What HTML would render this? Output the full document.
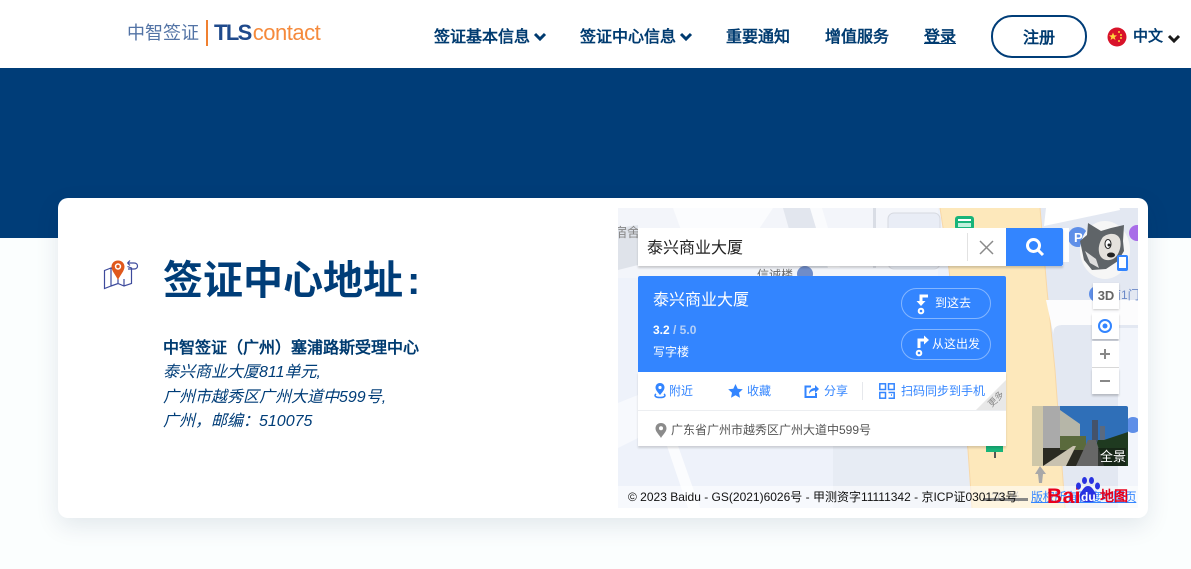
<!DOCTYPE html>
<html lang="zh"><head><meta charset="utf-8"><title>签证中心地址</title>
<style>
html,body{margin:0;padding:0;width:1191px;height:569px;overflow:hidden;background:#fbfefe;font-family:"Liberation Sans","WenQuanYi Zen Hei",sans-serif}
.a{position:absolute;white-space:nowrap}
.nav{font:bold 16px/20px "Liberation Sans","WenQuanYi Zen Hei",sans-serif;color:#003b70;top:28px}
.wq{font-family:"Liberation Sans","WenQuanYi Zen Hei",sans-serif}
.blue{color:#3385ff;font-size:12px;line-height:14px;top:384px}
</style></head><body>
<div class="a" style="left:0;top:0;width:1191px;height:68px;background:#fff"></div>
<div class="a" style="left:0;top:68px;width:1191px;height:170px;background:#003d78"></div>

<!-- logo -->
<div class="a" style="left:127px;top:22px;font-size:18px;line-height:22px;color:#5273a5">中智签证</div>
<div class="a" style="left:206px;top:20px;width:2px;height:26px;background:#f08030"></div>
<div class="a" style="left:214px;top:19px;font-size:22px;line-height:28px;font-weight:bold;color:#1f4a8c;letter-spacing:-1.6px">TLS<span style="font-weight:normal;color:#f58a3c;letter-spacing:-.5px;margin-left:2px">contact</span></div>

<!-- nav -->
<div class="a nav" style="left:434px">签证基本信息</div>
<svg class="a" style="left:533px;top:31px" width="14" height="11" viewBox="0 0 14 11"><path d="M2 3l5 5 5-5" fill="none" stroke="#003b70" stroke-width="3"/></svg>
<div class="a nav" style="left:580px">签证中心信息</div>
<svg class="a" style="left:679px;top:31px" width="14" height="11" viewBox="0 0 14 11"><path d="M2 3l5 5 5-5" fill="none" stroke="#003b70" stroke-width="3"/></svg>
<div class="a nav" style="left:726px">重要通知</div>
<div class="a nav" style="left:825px">增值服务</div>
<div class="a nav" style="left:924px;text-decoration:underline">登录</div>
<div class="a" style="left:991px;top:15px;width:92px;height:39px;border:2px solid #003d78;border-radius:21px"></div>
<div class="a nav" style="left:1023px;top:29px">注册</div>
<svg class="a" style="left:1107px;top:27px" width="20" height="20" viewBox="0 0 20 20"><circle cx="10" cy="10" r="9.5" fill="#d8132a"/><path d="M6 5.500l1.100 2.800 2.900.1-2.300 1.800.8 2.800L6 11.400 3.500 13l.8-2.800L2 8.400l2.900-.1z" fill="#ffd23c"/><circle cx="12" cy="5" r="1" fill="#ffd23c"/><circle cx="14" cy="8" r="1" fill="#ffd23c"/><circle cx="14" cy="11" r="1" fill="#ffd23c"/><circle cx="12" cy="14" r="1" fill="#ffd23c"/></svg>
<div class="a" style="left:1133px;top:27px;font-size:15px;line-height:20px;font-weight:bold;color:#003b70">中文</div>
<svg class="a" style="left:1167px;top:33px" width="14" height="11" viewBox="0 0 14 11"><path d="M2 3l5 5 5-5" fill="none" stroke="#1a1a1a" stroke-width="3"/></svg>

<!-- card -->
<div class="a" style="left:58px;top:198px;width:1090px;height:320px;background:#fff;border-radius:10px;box-shadow:0 8px 24px rgba(0,40,80,.1)"></div>

<!-- pin icon -->
<svg class="a" style="left:102px;top:257px" width="38" height="34" viewBox="0 0 38 34" fill="none">
<path d="M2.500 13.500L9 11v18l-6.500 2.500zM9 29l7-2.500 6 2.500 7.500-2.500V11l-4-1.500M9 11l2 1M16 22v4.500M22 22v7" stroke="#3d4a9c" stroke-width="1.200"/>
<path d="M16 3.500c-4 0-6.500 3-6.500 6.300 0 4 4 8 6.500 13.200 2.500-5.200 6.500-9.200 6.500-13.200 0-3.300-2.500-6.300-6.500-6.300z" fill="#e0581c"/>
<circle cx="16" cy="9.500" r="3.200" fill="#fff"/><circle cx="16" cy="9.500" r="1.700" fill="#e0581c"/>
<path d="M25.500 6h6.500c2.500 0 3.500 1.500 3.500 3s-1 3-3.500 3h-6M25.500 6l2.500-2.500M25.500 6l2.500 2.500" stroke="#3d4a9c" stroke-width="1.200"/>
</svg>

<!-- left text -->
<div class="a" style="left:163px;top:255px;font-family:'Liberation Sans','Noto Sans CJK SC',sans-serif;font-size:40px;line-height:52px;font-weight:bold;color:#003d78">签证中心地址<span style="margin-left:4px">:</span></div>
<div class="a" style="left:163px;top:337px;font-size:16px;line-height:23px;font-weight:bold;color:#003b70">中智签证（广州）塞浦路斯受理中心</div>
<div class="a" style="left:163px;top:361px;font-size:16px;line-height:24.5px;font-style:italic;color:#003d78">泰兴商业大厦811单元,<br>广州市越秀区广州大道中599号,<br>广州，邮编：510075</div>

<!-- map -->
<div class="a" style="left:618px;top:208px;width:520px;height:300px;overflow:hidden;background:#eef2fa">
<svg style="position:absolute;left:0;top:0" width="520" height="300" viewBox="0 0 520 300">
<rect width="520" height="300" fill="#eef2fa"/>
<path d="M0 0h320v70H0z" fill="#f3f5fa"/>
<path d="M0 20l20-3v40l-20 5z" fill="#dfe3ea"/>
<path d="M55 0h100l-20 30-60 25z" fill="#fbfcfe"/>
<path d="M165 0h35l12 60h-30z" fill="#e2e6ee"/>
<path d="M192 0h12l18 60h-12z" fill="#fafbfd"/>
<path d="M255 0h3v60h-3z" fill="#d9dde5"/>
<rect x="270" y="5" width="52" height="56" rx="6" fill="#e9edf6" stroke="#d6d9e0"/>
<path d="M215 232h135l8 68H215z" fill="#e7ecf4"/>
<path d="M47 232h11l24 68H70z" fill="#fbfcfe"/>
<path d="M0 195l50-20v40L0 240z" fill="#f7f9fd"/>
<path d="M422 0h98v300h-75l-8-138-8-80z" fill="#e3e8f2"/>
<path d="M428 0l70-14 4 16-76 16z" fill="#fff"/>
<path d="M322 0h100l7 82 8 80 10 138h-93l-4-58-20-190z" fill="#fde8bb"/>
<path d="M322 0l8 52 20 190 4 58M422 0l7 82 8 80 10 138" fill="none" stroke="#f8d8a8" stroke-width="1"/>
<path d="M429 92h91v25H445c-8 0-11 4-9 12l-8-37z" fill="#fcfcfd"/>
<rect x="500" y="120" width="20" height="180" fill="#f2f5fb"/>
<rect x="337" y="8" width="19" height="14" rx="3" fill="#18b47a"/><rect x="340" y="11" width="13" height="2" fill="#fff"/><rect x="340" y="15" width="13" height="4" fill="#bff0dc"/>
<rect x="368" y="238" width="17" height="6" fill="#18b47a"/><rect x="376" y="244" width="2" height="6" fill="#555"/>
<circle cx="460" cy="29" r="10" fill="#5f8fe8"/><text x="456" y="34" font-size="13" font-weight="bold" fill="#fff" font-family="Liberation Sans">P</text>
<circle cx="519" cy="25" r="8" fill="#a86de8"/>
<circle cx="479" cy="86" r="8" fill="#5f8fe8"/>
<text x="491" y="91" font-size="12" fill="#6a88c8" font-family="Liberation Sans,WenQuanYi Zen Hei">南1门</text>
<circle cx="515" cy="217" r="8" fill="#5f8fe8"/>
<text x="-4" y="29" font-size="13" fill="#888" font-family="Liberation Sans,WenQuanYi Zen Hei">宿舍</text>
<text x="139" y="71" font-size="12" fill="#666" font-family="Liberation Sans,WenQuanYi Zen Hei">信诚楼</text>
<circle cx="187" cy="66" r="8" fill="#6f8cc8"/>
<!-- panorama -->
<rect x="414" y="198" width="96" height="60" rx="2" fill="#2f6fb8"/>
<path d="M414 198h11v60h-11z" fill="#cfc7a8"/>
<path d="M425 198h17v60h-17z" fill="#aaa"/>
<path d="M425 240h55v18h-55z" fill="#2a2a22"/>
<path d="M442 202l20 14v22h-20z" fill="#b6b6a8"/>
<path d="M442 228h26v14h-26z" fill="#5a6a3c"/>
<rect x="474" y="212" width="6" height="22" fill="#44526a"/><rect x="482" y="218" width="5" height="18" fill="#5a6a80"/>
<path d="M470 258l10-26h6l24-8v34z" fill="#1f3a20"/>
<path d="M458 258l12-26h8l8 26z" fill="#676767"/>
<path d="M425 258l30-20h3l-10 20z" fill="#c9c2b0"/>
<rect x="480" y="240" width="28" height="18" fill="#131a12" opacity=".6"/>
<path d="M422 258l-5 8h3l1 9h3l1-9h3z" fill="#a8a8a8"/>
<text x="373" y="293" font-size="12" fill="#999" font-family="Liberation Sans,WenQuanYi Zen Hei">20 米</text>
</svg>

<!-- copyright -->
<div class="a" style="left:0;top:278px;width:520px;height:22px;background:rgba(255,255,255,.55)"></div>
<div class="a" style="left:365px;top:290px;width:45px;height:3px;background:#888"></div>
<div class="a" style="left:10px;top:281px;font-size:12px;line-height:16px;color:#111">© 2023 Baidu - GS(2021)6026号 - 甲测资字11111342 - 京ICP证030173号</div>
<div class="a" style="left:413px;top:281px;font-size:12px;line-height:16px;color:#3385ff;text-decoration:underline;letter-spacing:-.3px">版权所有百度地图页</div>
<div class="a" style="left:429px;top:277px;font-size:21px;line-height:24px;font-weight:bold;color:#e8001c;letter-spacing:.4px">Bai</div>
<svg class="a" style="left:457px;top:269px" width="26" height="26" viewBox="0 0 26 26"><ellipse cx="3.500" cy="9" rx="2.500" ry="3.500" fill="#2932e1"/><ellipse cx="9.500" cy="3.500" rx="2.500" ry="3.500" fill="#2932e1"/><ellipse cx="16.500" cy="3.500" rx="2.500" ry="3.500" fill="#2932e1"/><ellipse cx="22.500" cy="9" rx="2.500" ry="3.500" fill="#2932e1"/><path d="M13 9c-3.500 0-4.500 3-7 6-3 4-.5 10 4 10h6c4.500 0 7-6 4-10-2.500-3-3.500-6-7-6z" fill="#2932e1"/></svg>
<div class="a" style="left:463px;top:282px;font-size:12px;line-height:14px;font-weight:bold;color:#fff">du</div>
<div class="a" style="left:482px;top:279px;font-size:14px;line-height:18px;font-weight:bold;color:#e8001c">地图</div>
</div>

<!-- search -->
<div class="a" style="left:1063px;top:228px;width:6px;height:34px;background:#fff"></div>
<div class="a" style="left:638px;top:228px;width:425px;height:38px;background:#fff;box-shadow:0 2px 2px rgba(0,0,0,.18)"></div>
<div class="a wq" style="left:647px;top:239px;font-size:16px;line-height:20px;color:#222">泰兴商业大厦</div>
<div class="a" style="left:967px;top:233px;width:1px;height:28px;background:#e2e2e2"></div>
<svg class="a" style="left:978px;top:239px" width="17" height="17" viewBox="0 0 17 17"><path d="M2 2l13 13M15 2L2 15" stroke="#8a8a8a" stroke-width="1.500"/></svg>
<div class="a" style="left:1006px;top:228px;width:57px;height:38px;background:#3385ff;border-radius:0 2px 2px 0"></div>
<svg class="a" style="left:1025px;top:237px" width="20" height="20" viewBox="0 0 20 20" fill="none"><circle cx="8.500" cy="8.500" r="6" stroke="#fff" stroke-width="3"/><path d="M13 13l5 5" stroke="#fff" stroke-width="3"/></svg>

<!-- blue panel -->
<div class="a" style="left:638px;top:276px;width:368px;height:96px;background:#3385ff;border-radius:2px 2px 0 0"></div>
<div class="a wq" style="left:653px;top:291px;font-size:16px;line-height:20px;color:#fff">泰兴商业大厦</div>
<div class="a" style="left:653px;top:323px;font-size:12px;line-height:14px;font-weight:bold;color:#fff">3.2 <span style="color:#b5d0f7">/ 5.0</span></div>
<div class="a wq" style="left:653px;top:345px;font-size:12px;line-height:14px;color:#fff">写字楼</div>
<div class="a" style="left:901px;top:288px;width:88px;height:29px;border:1px solid rgba(255,255,255,.4);border-radius:16px"></div>
<div class="a" style="left:901px;top:329px;width:88px;height:29px;border:1px solid rgba(255,255,255,.4);border-radius:16px"></div>
<svg class="a" style="left:915px;top:293px" width="16" height="22" viewBox="0 0 16 22" fill="none"><path d="M13 3H6v7" stroke="#fff" stroke-width="3"/><path d="M1.500 8h9L6 13z" fill="#fff"/><circle cx="6" cy="18" r="2.300" stroke="#fff" stroke-width="2"/></svg>
<div class="a wq" style="left:935px;top:296px;font-size:12px;line-height:14px;color:#fff">到这去</div>
<svg class="a" style="left:914px;top:334px" width="18" height="24" viewBox="0 0 18 24" fill="none"><path d="M5 14V6h5" stroke="#fff" stroke-width="3"/><path d="M10 1.500v9L15 6z" fill="#fff"/><circle cx="5" cy="19" r="2.300" stroke="#fff" stroke-width="2"/></svg>
<div class="a wq" style="left:932px;top:337px;font-size:12px;line-height:14px;color:#fff">从这出发</div>

<!-- white panel -->
<div class="a" style="left:638px;top:372px;width:368px;height:74px;background:#fff;box-shadow:0 2px 2px rgba(0,0,0,.15)"></div>
<div class="a" style="left:638px;top:410px;width:368px;height:1px;background:#eceef1"></div>
<svg class="a" style="left:654px;top:383px" width="12" height="16" viewBox="0 0 12 16"><path d="M6 0C3 0 1.500 2.200 1.500 4.500 1.500 7 4 9.500 6 12c2-2.500 4.500-5 4.500-7.500C10.500 2.200 9 0 6 0z" fill="#3385ff"/><circle cx="6" cy="4.500" r="1.600" fill="#fff"/><path d="M2 11c-2 1.500-1 3.500 4 3.500s6-2 4-3.500" fill="none" stroke="#3385ff" stroke-width="1.500"/></svg>
<div class="a wq blue" style="left:669px">附近</div>
<svg class="a" style="left:728px;top:384px" width="15" height="14" viewBox="0 0 15 14"><path d="M7.500 0l2.200 4.700 5.100.6-3.800 3.500 1 5-4.500-2.500L3 13.800l1-5L.2 5.300l5.100-.6z" fill="#3385ff"/></svg>
<div class="a wq blue" style="left:747px">收藏</div>
<svg class="a" style="left:804px;top:384px" width="15" height="14" viewBox="0 0 15 14" fill="none"><path d="M7 2.500H1.500v10.500H12V9" stroke="#3385ff" stroke-width="2"/><path d="M5 10c0-4 2.500-6 6-6V1l4 4-4 4V6.500C8.500 6.500 6.500 7.500 5 10z" fill="#3385ff"/></svg>
<div class="a wq blue" style="left:824px">分享</div>
<div class="a" style="left:862px;top:382px;width:1px;height:18px;background:#e6e8ec"></div>
<svg class="a" style="left:879px;top:383px" width="16" height="16" viewBox="0 0 16 16" fill="none" stroke="#3385ff" stroke-width="1.500"><rect x=".8" y=".8" width="5.700" height="5.700"/><rect x="9.500" y=".8" width="5.700" height="5.700"/><rect x=".8" y="9.500" width="5.700" height="5.700"/><path d="M9.500 9.500h5.700v5.700H9.500M12 12h1"/></svg>
<div class="a wq blue" style="left:901px">扫码同步到手机</div>
<div class="a" style="left:976px;top:380px;width:30px;height:30px;background:#e8e8e8;clip-path:polygon(100% 0,100% 100%,0 100%)"></div>
<div class="a" style="left:987px;top:393px;font-size:9px;line-height:12px;color:#888;transform:rotate(-45deg)">更多</div>
<svg class="a" style="left:655px;top:423px" width="12" height="15" viewBox="0 0 12 15"><path d="M6 0C2.800 0 .5 2.300.5 5.300.5 9 4 11.500 6 15c2-3.500 5.500-6 5.500-9.700C11.500 2.300 9.200 0 6 0z" fill="#8b8b8b"/><circle cx="6" cy="5.300" r="2" fill="#fff"/></svg>
<div class="a wq" style="left:671px;top:423px;font-size:12px;line-height:14px;color:#555">广东省广州市越秀区广州大道中599号</div>

<!-- avatar -->
<svg class="a" style="left:1078px;top:219px" width="54" height="62" viewBox="0 0 54 62">
<ellipse cx="27" cy="31" rx="25" ry="29" fill="#f6f6f6"/>
<path d="M2 22l7-6 1-12 13 8 10-3 13-3-1 16 1 10-6 10-12 8-14 1-8-10z" fill="#5f6468"/>
<path d="M25 18c5-4 14-5 17 2 2 7-1 17-7 20-7 3-13 0-14-7-1-5 1-11 4-15z" fill="#e4e1dc"/>
<ellipse cx="30" cy="25" rx="3" ry="4.500" fill="#fff" stroke="#222"/><circle cx="31" cy="26" r="1.500" fill="#222"/>
<ellipse cx="33" cy="36" rx="4" ry="2.500" fill="#222"/>
<path d="M7 32l5 12 9 5-3-9z" fill="#ddd"/>
<rect x="39" y="36" width="11" height="16" rx="2" fill="#3385ff"/><rect x="41" y="38" width="7" height="11" fill="#fff"/>
</svg>

<!-- controls -->
<div class="a" style="left:1093px;top:283px;width:26px;height:26px;background:#fff;box-shadow:0 1px 2px rgba(0,0,0,.2);font-size:13px;line-height:26px;font-weight:bold;color:#666;text-align:center">3D</div>
<div class="a" style="left:1092px;top:313px;width:27px;height:26px;background:#fff;box-shadow:0 2px 2px rgba(0,0,0,.2)"></div>
<svg class="a" style="left:1097px;top:318px" width="16" height="16" viewBox="0 0 16 16" fill="none"><circle cx="8" cy="8" r="6" stroke="#3385ff" stroke-width="2"/><circle cx="8" cy="8" r="2.500" fill="#3385ff"/></svg>
<div class="a" style="left:1092px;top:341px;width:27px;height:26px;background:#fff;border-bottom:1px solid #d8d8d8"></div>
<div class="a" style="left:1092px;top:368px;width:27px;height:26px;background:#fff;box-shadow:0 2px 2px rgba(0,0,0,.2)"></div>
<svg class="a" style="left:1098px;top:347px" width="14" height="40" viewBox="0 0 14 40"><path d="M2 7h10M7 2v10M2 34h10" stroke="#888" stroke-width="2"/></svg>

<div class="a wq" style="left:1100px;top:449px;font-size:13px;line-height:16px;color:#fff">全景</div>
</body></html>
